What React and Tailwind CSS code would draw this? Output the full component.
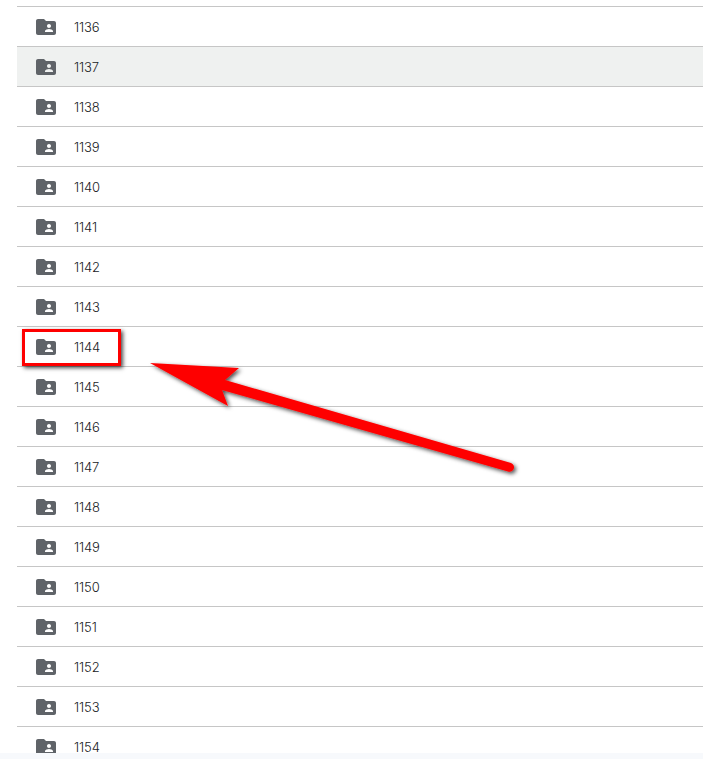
const labels = Array.from({ length: 19 }, (_, i) => 1136 + i);

function FolderShared() {
  return (
    <svg viewBox="0 0 24 24" className="w-6 h-6 shrink-0" fill="#5f6368">
      <path d="M20 6h-8l-2-2H4c-1.1 0-1.99.9-1.99 2L2 18c0 1.1.9 2 2 2h16c1.1 0 2-.9 2-2V8c0-1.1-.9-2-2-2zm-5 3c1.1 0 2 .9 2 2s-.9 2-2 2-2-.9-2-2 .9-2 2-2zm4 8h-8v-1c0-1.33 2.67-2 4-2s4 .67 4 2v1z" />
    </svg>
  );
}

function Row({ label }) {
  const active = label === 1137;
  return (
    <div
      className={`h-10 shrink-0 border-t border-[#c6c6c6] flex items-center pl-[17px] gap-[16px] ${
        active ? "bg-[#eff1f0]" : "bg-white"
      }`}
    >
      <FolderShared />
      <span className="mt-[2px] text-[13px] tracking-[-0.1px] font-light text-[#202124] font-['Inter',sans-serif]">{label}</span>
    </div>
  );
}

export default function App() {
  return (
    <div className="relative w-[703px] h-[759px] overflow-hidden bg-white flex flex-col">
      <div className="flex-1 min-h-0 overflow-hidden pt-[6px] pl-[17px]">
        {labels.map((l) => (
          <Row key={l} label={l} />
        ))}
      </div>
      <div className="h-[6px] shrink-0 bg-[#f7f9fc]" />

      <div className="absolute left-[22px] top-[329px] w-[99px] h-[37px] border-[3px] border-[#fe0000] shadow-[2px_2px_4px_rgba(0,0,0,0.7)]" />

      <svg className="absolute left-0 top-0" width="703" height="759" viewBox="0 0 703 759">
        <defs>
          <filter id="ds" x="-10%" y="-20%" width="120%" height="140%">
            <feDropShadow dx="2" dy="2" stdDeviation="2" floodColor="#000" floodOpacity="0.7" />
          </filter>
        </defs>
        <path
          d="M150 363 L239 368 L225 380 L511 463 A4.3 4.3 0 0 1 508 471.5 L222 390 L228 406 Z"
          fill="#fe0000"
          filter="url(#ds)"
        />
      </svg>
    </div>
  );
}
